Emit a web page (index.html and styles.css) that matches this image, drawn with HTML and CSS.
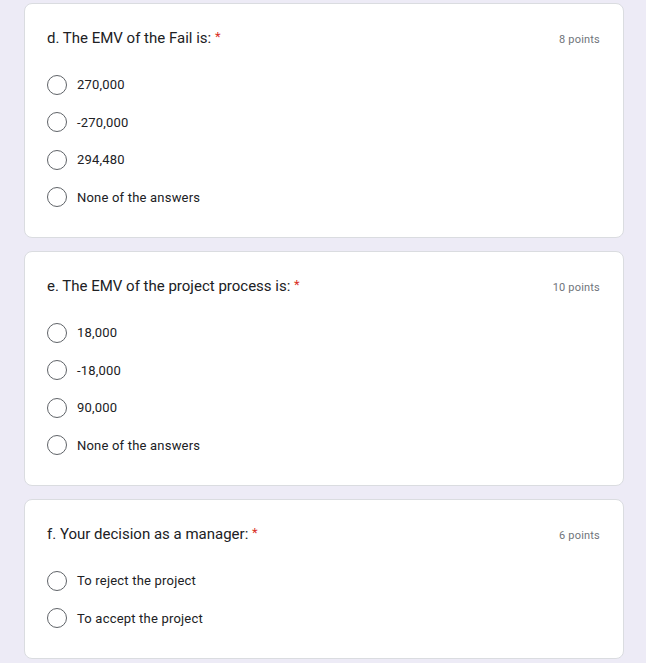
FILE: index.html
```html
<!DOCTYPE html>
<html>
<head>
<meta charset="utf-8">
<link rel="stylesheet" href="styles.css">
</head>
<body>
<div class="page">
  <div class="card">
    <div class="head">
      <div class="title">d. The EMV of the Fail is: <span class="req">*</span></div>
      <div class="points">8 points</div>
    </div>
    <div class="options">
      <div class="opt"><span class="radio"></span><span class="label">270,000</span></div>
      <div class="opt"><span class="radio"></span><span class="label">-270,000</span></div>
      <div class="opt"><span class="radio"></span><span class="label">294,480</span></div>
      <div class="opt"><span class="radio"></span><span class="label">None of the answers</span></div>
    </div>
  </div>
  <div class="card">
    <div class="head">
      <div class="title">e. The EMV of the project process is: <span class="req">*</span></div>
      <div class="points">10 points</div>
    </div>
    <div class="options">
      <div class="opt"><span class="radio"></span><span class="label">18,000</span></div>
      <div class="opt"><span class="radio"></span><span class="label">-18,000</span></div>
      <div class="opt"><span class="radio"></span><span class="label">90,000</span></div>
      <div class="opt"><span class="radio"></span><span class="label">None of the answers</span></div>
    </div>
  </div>
  <div class="card">
    <div class="head">
      <div class="title">f. Your decision as a manager: <span class="req">*</span></div>
      <div class="points">6 points</div>
    </div>
    <div class="options">
      <div class="opt"><span class="radio"></span><span class="label">To reject the project</span></div>
      <div class="opt"><span class="radio"></span><span class="label">To accept the project</span></div>
    </div>
  </div>
</div>
</body>
</html>
```
FILE: styles.css
```css
html, body {
  margin: 0;
  padding: 0;
  background: #edebf6;
}
.page {
  padding: 3px 0 0 24px;
  width: 600px;
  display: flex;
  flex-direction: column;
  gap: 13px;
}
.card {
  background: #fff;
  border: 1px solid #dadce0;
  border-radius: 8px;
  padding: 22px 23px 21px 22px;
}
.head {
  display: flex;
  justify-content: space-between;
  align-items: center;
  height: 24px;
}
.title {
  font-family: Roboto, sans-serif;
  font-size: 15px;
  color: #202124;
}
.req {
  color: #d93025;
  font-size: 13px;
  vertical-align: top;
}
.points {
  font-family: Roboto, sans-serif;
  font-size: 11px;
  color: #70757a;
  letter-spacing: 0.2px;
  margin-top: 2px;
}
.options {
  margin-top: 16px;
  display: flex;
  flex-direction: column;
}
.opt {
  height: 37.5px;
  display: flex;
  align-items: center;
}
.radio {
  box-sizing: border-box;
  width: 20px;
  height: 20px;
  border: 1.5px solid #5f6368;
  border-radius: 50%;
}
.label {
  margin-left: 10px;
  font-family: Roboto, sans-serif;
  font-size: 13px;
  color: #202124;
  letter-spacing: 0.2px;
}
```
